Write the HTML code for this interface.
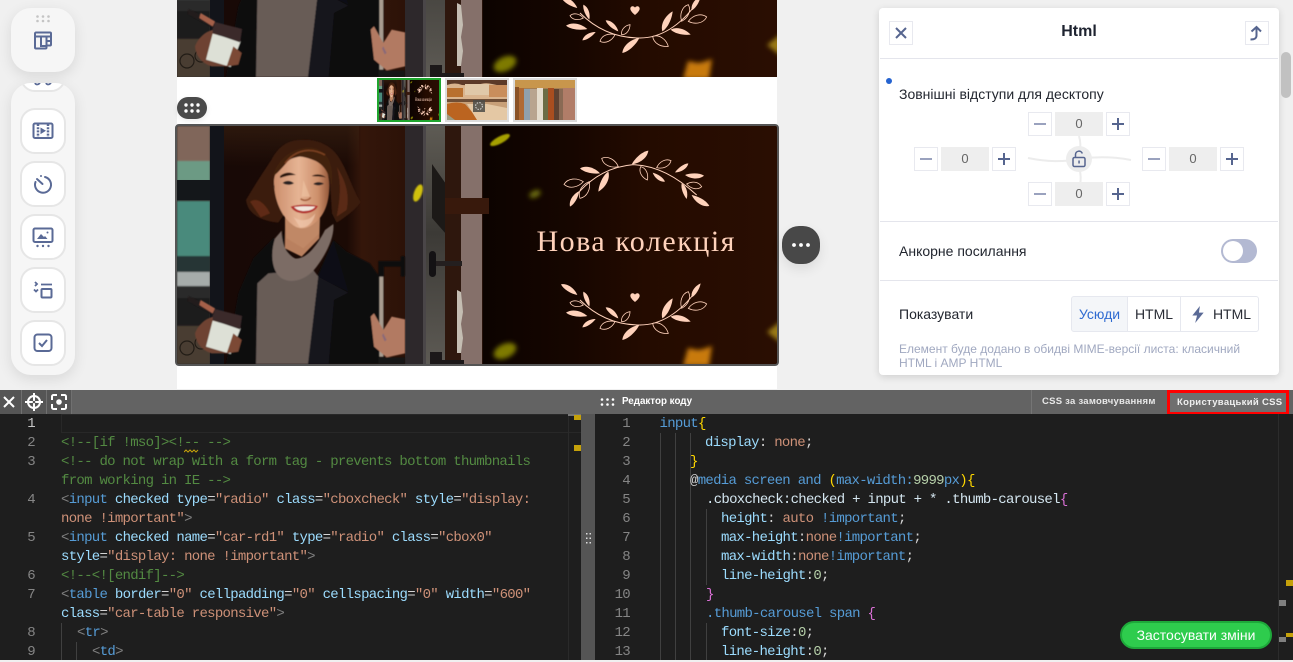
<!DOCTYPE html>
<html lang="uk"><head><meta charset="utf-8"><title>Html</title>
<style>
*{box-sizing:border-box}
html,body{margin:0;padding:0}
body{width:1293px;height:660px;overflow:hidden;background:#f0f0f0;position:relative;font-family:"Liberation Sans",sans-serif}
.a{position:absolute}
svg{display:block}
.tb{position:absolute;left:11px;width:64px;background:#f6f6f6;box-shadow:0 4px 14px rgba(0,0,0,.1)}
.bt{position:absolute;left:9px;width:46px;height:46px;background:#fff;border:2px solid #e6e6e6;border-radius:15px}
.bt svg{position:absolute;left:10px;top:10px}
.ic{fill:none;stroke:#5a6a96;stroke-width:1.8}
.thumb{position:absolute;top:78px;width:64px;height:44px;border:2px solid #dcdcdc;background:#fff;padding:1px}
.nb{position:absolute;width:24px;height:24px;background:#fff;border:1px solid #e8e9ef}
.nb:before{content:"";position:absolute;left:5px;top:10px;width:12px;height:2px;background:#9aa2be}
.nb.p:before{background:#56658f;left:5px;width:12px}
.nb.p:after{content:"";position:absolute;left:10px;top:5px;width:2px;height:12px;background:#56658f}
.nv{position:absolute;width:48px;height:24px;background:#eee;color:#666;font-size:13px;line-height:24px;text-align:center}
.tx{position:absolute;font-size:14px;color:#22262f;white-space:nowrap;line-height:18px}
.ln{position:absolute;height:1px;left:880px;width:398px;background:#e4e5ec}
.seg{position:absolute;top:296px;height:36px;line-height:34px;font-size:14px;color:#2a2d36;text-align:center;border:1px solid #e6e8ef}
.code{position:absolute;font-family:"Liberation Mono","DejaVu Sans Mono",monospace;font-size:14px;letter-spacing:-.71px;line-height:19px;height:19px;white-space:pre;color:#d4d4d4;transform:translateY(1px)}
.n{position:absolute;font-family:"Liberation Mono",monospace;font-size:14px;letter-spacing:-.71px;line-height:19px;color:#858585;text-align:right;width:24px;transform:translateY(1px)}
.g{position:absolute;width:1px;background:#404040}
.c{color:#538a42}.t{color:#569cd6}.b{color:#808080}.at{color:#9cdcfe}.s{color:#ce9178}
.y{color:#ffd700}.m{color:#da70d6}.w{color:#d4d4d4}.l{color:#d4e6f0}
</style></head><body>

<!-- hero artwork -->
<svg width="0" height="0" style="position:absolute">
<defs>
<filter id="bl" x="-60%" y="-60%" width="220%" height="220%"><feGaussianBlur stdDeviation="2.400"/></filter>
<filter id="bs" x="-20%" y="-20%" width="140%" height="140%"><feGaussianBlur stdDeviation=".7"/></filter>
<filter id="wf" x="-5%" y="-5%" width="110%" height="110%"><feGaussianBlur stdDeviation="1.500"/></filter>
<linearGradient id="rg" x1="0" x2="1" y1="0" y2="0"><stop offset="0" stop-color="#0c0300"/><stop offset=".3" stop-color="#160600"/><stop offset=".55" stop-color="#240b00"/><stop offset="1" stop-color="#2a0e02"/></linearGradient>
<linearGradient id="ig" x1="0" x2="1" y1="0" y2="0"><stop offset="0" stop-color="#180906"/><stop offset=".68" stop-color="#1b0a05"/><stop offset=".76" stop-color="#34160a"/><stop offset="1" stop-color="#2c1208"/></linearGradient>
<linearGradient id="it" x1="0" x2="0" y1="0" y2="1"><stop offset="0" stop-color="#3a2212" stop-opacity=".6"/><stop offset="1" stop-color="#3a2212" stop-opacity="0"/></linearGradient>
<linearGradient id="sk" x1="0" x2="1" y1="0" y2="0"><stop offset="0" stop-color="#cc8e6c"/><stop offset=".45" stop-color="#e6b494"/><stop offset=".8" stop-color="#cc8e6a"/><stop offset="1" stop-color="#94583a"/></linearGradient>
<linearGradient id="gl" x1="0" x2="0" y1="0" y2="1"><stop offset="0" stop-color="#5e5b54"/><stop offset=".45" stop-color="#3c3a36"/><stop offset="1" stop-color="#5d5a54"/></linearGradient>
<symbol id="hero" viewBox="0 0 600 238" preserveAspectRatio="none" overflow="hidden">
<rect x="306" width="294" height="238" fill="url(#rg)"/>
<!-- left window -->
<rect width="47" height="238" fill="#2c2a28"/>
<g filter="url(#bs)">
<rect width="33" height="40" fill="#80665a"/>
<rect y="35" width="33" height="20" fill="#6c9a84"/>
<rect y="75" width="33" height="60" fill="#4a8a7c"/>
<rect y="130" width="33" height="18" fill="#263436"/>
<rect y="146" width="33" height="14" fill="#a6acaa"/>
<rect y="160" width="33" height="12" fill="#2a2c2c"/>
<rect y="172" width="33" height="28" fill="#1e1c1a"/>
<rect y="200" width="33" height="38" fill="#4a3e30"/>
</g>
<circle cx="10" cy="222" r="7" fill="none" stroke="#221c16" stroke-width="1.200"/>
<circle cx="24" cy="217" r="6" fill="none" stroke="#221c16" stroke-width="1.200"/>
<rect y="54" width="47" height="20" fill="#14171a"/>
<rect x="33" width="14" height="238" fill="#12141a"/>
<!-- interior -->
<rect x="47" width="181" height="238" fill="url(#ig)"/>
<rect x="47" width="135" height="40" fill="url(#it)"/>
<!-- door -->
<rect x="248" width="58" height="238" fill="#26120a"/>
<rect x="249" width="19" height="238" fill="url(#gl)"/>
<path d="M255 38l14 20v50l-14-16z" fill="#1c1917"/>
<rect x="268" width="16" height="238" fill="#2e170d"/>
<rect x="284" width="21" height="73" fill="#85706a"/>
<rect x="284" y="88" width="21" height="150" fill="#85706a"/>
<rect x="268" y="72" width="44" height="16" fill="#38190c"/>
<path d="M280 164l4 2 2 20-2 12 2 14-2 15h-4z" fill="#c4bdb2"/>
<rect x="228" width="20" height="238" fill="#2d282b"/>
<rect x="246" width="3" height="238" fill="#4a4648"/>
<path d="M258 135h27v5h-27z" fill="#241f1f"/>
<rect x="252" y="125" width="7" height="26" rx="3.500" fill="#141214"/>
<path d="M253 226h12v8h22v4h-34z" fill="#1c1819"/>
<!-- woman: coordinates in 3x crop space -->
<g transform="translate(-7,-126) scale(.33333)" filter="url(#wf)">
<path d="M312 712L250 775 205 880 168 1092H628L625 825 600 790 530 755 490 720 440 830 345 850z" fill="#0c0b0f"/>
<path d="M295 820L262 850 258 1092H415L445 830 430 810z" fill="#675b56"/>
<path d="M445 830L535 878 492 900 476 1092H414z" fill="#15131a"/>
<path d="M490 720L535 875 445 830z" fill="#0f0e13"/>
<path d="M345 650L450 650 448 715 395 770 345 745z" fill="#b9805e"/>
<path d="M340 690L345 745 372 775 330 760z" fill="#100a08"/>
<path d="M490 672C494 710 470 760 440 800C415 835 370 855 335 835C305 815 300 760 315 715L335 692C336 730 345 760 375 775C410 780 445 730 465 690z" fill="#7b6c65"/>
<!-- hair -->
<path d="M305 478C280 515 248 565 228 600C232 635 262 662 325 668L345 640 310 560 330 490 420 470 478 520 486 640 500 668C530 650 560 625 572 606C548 570 532 510 505 470C480 430 430 415 390 420C350 420 322 445 305 478z" fill="#3a1b0d"/>
<path d="M240 605C262 590 285 610 300 640L272 652z" fill="#5e2c12"/>
<path d="M500 500C525 540 540 580 530 630L500 650C510 600 515 550 500 500z" fill="#5a2c15"/>
<path d="M348 660L448 660 448 700 400 745 350 715z" fill="#c08866"/>
<!-- face -->
<path d="M312 545C312 505 350 470 405 468C452 470 478 505 478 555C478 610 462 650 430 672C410 688 385 690 365 672C335 650 312 600 312 545z" fill="url(#sk)"/>
<path d="M308 530C320 480 365 440 425 442C470 448 495 490 485 560C478 520 462 490 425 478C395 468 372 462 348 490C335 505 322 520 308 530z" fill="#43200f"/>
<path d="M345 490C375 450 420 440 465 465" stroke="#7a4020" stroke-width="5" fill="none"/>
<path d="M330 528C345 515 362 515 378 525C362 524 345 528 330 534zM425 528C440 520 455 522 468 532C452 529 438 530 425 528z" fill="#2a140c"/>
<path d="M338 549C348 540 362 541 372 550C360 556 348 556 338 549zM430 552C438 544 452 545 462 551C452 557 440 558 430 552z" fill="#2c2422"/>
<path d="M392 596C400 604 416 602 422 592" stroke="#a5603e" stroke-width="5" fill="none"/>
<path d="M400 540L420 590 395 590z" fill="#f0c8a8" opacity=".55"/>
<path d="M362 620C385 612 420 612 444 618C438 632 420 640 402 640C385 640 370 634 362 620z" fill="#b3302f"/>
<path d="M372 621C392 618 415 618 436 620C428 630 415 633 402 633C390 633 380 630 372 621z" fill="#f2e6dc"/>
<path d="M370 650C390 668 420 662 436 640C430 670 410 684 390 682z" fill="#f0c8ac" opacity=".7"/>
<!-- cup & left hand -->
<path d="M75 1000C85 975 105 955 132 950L170 1000 170 1060 125 1060C95 1050 78 1030 75 1000z" fill="#6e4232"/>
<path d="M128 962L212 985 182 1062 108 1040z" fill="#dde0d6"/>
<path d="M128 925L216 948 210 988 128 960z" fill="#3b2a2c"/>
<path d="M190 1000L215 1020 205 1055 170 1060z" fill="#7c4a36"/>
<path d="M55 888L135 925 130 945 55 905z" fill="#201a1a"/>
<path d="M92 900L135 925 128 940 88 915z" fill="#a5604a"/>
<!-- door handle -->
<path d="M625 783H700V800H642V1092H625z" fill="#0e0c0d"/>
<rect x="628" y="830" width="12" height="240" fill="#a89c90"/>
<rect x="692" y="768" width="13" height="62" rx="5" fill="#0c0b0c"/>
<!-- right hand -->
<path d="M602 950L612 940 640 990 665 950 705 958V1060L650 1072 612 1040z" fill="#b27a62"/>
<path d="M640 1000l10 20-6 4-8-18z" fill="#8a6a78"/>
<path d="M625 1072H705V1092H625z" fill="#171314"/>
</g>
<!-- yellow blobs -->
<ellipse cx="241" cy="67" rx="4" ry="9" transform="rotate(20 241 67)" fill="#d0c010" filter="url(#bs)"/>
<ellipse cx="323" cy="14" rx="11" ry="3.500" transform="rotate(-28 323 14)" fill="#a5a000" filter="url(#bs)"/>
<ellipse cx="358" cy="68" rx="6" ry="3.500" transform="rotate(-25 358 68)" fill="#6a6a08" filter="url(#bl)"/>
<ellipse cx="328" cy="225" rx="12" ry="7" transform="rotate(-25 328 225)" fill="#7e7a05" filter="url(#bl)"/>
<!-- right side glow -->
<path d="M506 240l5-18 10 2 5-1 9-3-3 20z" fill="#c87a08" filter="url(#bl)"/>
<path d="M590 206l14-11v22z" fill="#9a7a18" filter="url(#bl)"/>
<!-- wreaths (coordinates in 3x space) -->
<g transform="translate(323,-126) scale(.33333)" fill="#ffd2bb">
<path d="M238 575C280 530 330 500 400 494C470 497 530 530 590 585" fill="none" stroke="#ffd2bb" stroke-width="3"/>
<path transform="matrix(60,15,-15,60,240,505)" d="M0 0C.25-.24.7-.2 1 0C.7.12.25.15 0 0Z"/>
<path transform="matrix(-30,60,-60,-30,325,515)" d="M0 0C.25-.24.7-.2 1 0C.7.12.25.15 0 0Z"/>
<path transform="matrix(-50,41,-41,-50,445,452)" d="M0 0C.25-.24.7-.2 1 0C.7.12.25.15 0 0Z"/>
<path transform="matrix(-40,27,-27,-40,565,490)" d="M0 0C.25-.24.7-.2 1 0C.7.12.25.15 0 0Z"/>
<path transform="matrix(-57,-2,2,-57,612,527)" d="M0 0C.25-.24.7-.2 1 0C.7.12.25.15 0 0Z"/>
<path transform="matrix(15,47,-47,15,545,550)" d="M0 0C.25-.24.7-.2 1 0C.7.12.25.15 0 0Z"/>
<path transform="matrix(-53,-33,33,-53,628,618)" d="M0 0C.25-.24.7-.2 1 0C.7.12.25.15 0 0Z"/>
<path transform="matrix(-37,-27,27,-37,495,545)" d="M0 0C.25-.24.7-.2 1 0C.7.12.25.15 0 0Z"/>
<path transform="matrix(28,-47,47,28,210,620)" d="M0 0C.25-.24.7-.2 1 0C.7.12.25.15 0 0Z"/>
<g fill="none" stroke="#ffd2bb" stroke-width=".8">
<path transform="matrix(50,25,-25,50,305,475)" d="M0 0C.25-.3.7-.25 1 0C.7.25.25.3 0 0Z" vector-effect="non-scaling-stroke"/>
<path transform="matrix(-43,21,-21,-43,513,482)" d="M0 0C.25-.3.7-.25 1 0C.7.25.25.3 0 0Z" vector-effect="non-scaling-stroke"/>
<path transform="matrix(20,40,-40,20,422,500)" d="M0 0C.25-.3.7-.25 1 0C.7.25.25.3 0 0Z" vector-effect="non-scaling-stroke"/>
<path transform="matrix(58,-8,8,58,192,553)" d="M0 0C.25-.3.7-.25 1 0C.7.25.25.3 0 0Z" vector-effect="non-scaling-stroke"/>
<path transform="matrix(28,-50,50,28,240,595)" d="M0 0C.25-.3.7-.25 1 0C.7.25.25.3 0 0Z" vector-effect="non-scaling-stroke"/>
<path transform="matrix(-45,-8,8,-45,605,560)" d="M0 0C.25-.3.7-.25 1 0C.7.25.25.3 0 0Z" vector-effect="non-scaling-stroke"/>
</g>
<path d="M240 900C290 950 350 975 420 975C480 975 540 940 590 870" fill="none" stroke="#ffd2bb" stroke-width="3"/>
<path transform="matrix(49,32,-32,49,183,853)" d="M0 0C.25-.24.7-.2 1 0C.7.12.25.15 0 0Z"/>
<path transform="matrix(18,45,-45,18,250,875)" d="M0 0C.25-.24.7-.2 1 0C.7.12.25.15 0 0Z"/>
<path transform="matrix(64,10,-10,64,198,938)" d="M0 0C.25-.24.7-.2 1 0C.7.12.25.15 0 0Z"/>
<path transform="matrix(40,-25,25,40,247,982)" d="M0 0C.25-.24.7-.2 1 0C.7.12.25.15 0 0Z"/>
<path transform="matrix(38,33,-33,38,317,922)" d="M0 0C.25-.24.7-.2 1 0C.7.12.25.15 0 0Z"/>
<path transform="matrix(51,-45,45,51,367,1020)" d="M0 0C.25-.24.7-.2 1 0C.7.12.25.15 0 0Z"/>
<path transform="matrix(31,-60,60,31,487,955)" d="M0 0C.25-.24.7-.2 1 0C.7.12.25.15 0 0Z"/>
<path transform="matrix(60,15,-15,60,512,950)" d="M0 0C.25-.24.7-.2 1 0C.7.12.25.15 0 0Z"/>
<path transform="matrix(27,-42,42,27,575,892)" d="M0 0C.25-.24.7-.2 1 0C.7.12.25.15 0 0Z"/>
<g fill="none" stroke="#ffd2bb" stroke-width=".8">
<path transform="matrix(40,7,-7,40,210,908)" d="M0 0C.25-.3.7-.25 1 0C.7.25.25.3 0 0Z" vector-effect="non-scaling-stroke"/>
<path transform="matrix(25,-30,30,25,365,965)" d="M0 0C.25-.3.7-.25 1 0C.7.25.25.3 0 0Z" vector-effect="non-scaling-stroke"/>
<path transform="matrix(45,-20,20,45,300,985)" d="M0 0C.25-.3.7-.25 1 0C.7.25.25.3 0 0Z" vector-effect="non-scaling-stroke"/>
<path transform="matrix(47,30,-30,47,458,970)" d="M0 0C.25-.3.7-.25 1 0C.7.25.25.3 0 0Z" vector-effect="non-scaling-stroke"/>
<path transform="matrix(-20,50,-50,-20,565,875)" d="M0 0C.25-.3.7-.25 1 0C.7.25.25.3 0 0Z" vector-effect="non-scaling-stroke"/>
<path transform="matrix(-55,13,-13,-55,620,912)" d="M0 0C.25-.3.7-.25 1 0C.7.25.25.3 0 0Z" vector-effect="non-scaling-stroke"/>
</g>
<path d="M405 906C395 898 391 892 391 887C391 879 401 877 405 884C409 877 419 879 419 887C419 892 415 898 405 906Z"/>
</g>
</symbol>
</defs>
</svg>

<!-- canvas -->
<div class="a" style="left:177px;top:0;width:600px;height:389px;background:#fff"></div>
<svg class="a" style="left:177px;top:0" width="600" height="77" viewBox="0 161 600 77"><use href="#hero" width="600" height="238"/></svg>

<div class="thumb" style="left:377px;border-color:#1fa52e;padding:0">
<svg width="60" height="40" viewBox="0 0 600 238" preserveAspectRatio="none"><use href="#hero" width="600" height="238"/><text x="360" y="125" font-family="Liberation Serif,serif" font-size="28" fill="#ffd2bb">Нова колекція</text></svg></div>
<div class="thumb" style="left:445px;padding:0">
<svg width="60" height="40" viewBox="0 0 60 40"><rect width="60" height="40" fill="#c8a078"/><rect width="60" height="5" fill="#5c3a28"/><path d="M0 5q8-3 15 0t15 0 15-1 15 1v14H0z" fill="#d9b48e"/><path d="M0 8h16v9H0z" fill="#b8702f"/><path d="M18 4h24v11H18z" fill="#e0c8a8"/><path d="M42 5h18v12H42z" fill="#c98e5c"/><rect y="19" width="60" height="3" fill="#6e4e36"/><path d="M0 24q10-3 18 0l14 16H0z" fill="#bb6420"/><path d="M20 24h20l20 4v12H30z" fill="#e4c8a4"/><path d="M0 34l8 6H0z" fill="#9d9c82"/></svg>
<div class="a" style="left:26px;top:20px;width:12px;height:12px;background:rgba(75,75,70,.85)"><svg width="12" height="12"><circle cx="6" cy="6" r="3.400" fill="none" stroke="#ddd" stroke-width="1" stroke-dasharray="1.500 1.200"/></svg></div></div>
<div class="thumb" style="left:513px;padding:0">
<svg width="60" height="40" viewBox="0 0 60 40"><rect width="60" height="40" fill="#a57e52"/><rect width="60" height="8" fill="#c8964c"/><rect y="7" width="4" height="33" fill="#8a5226"/><rect x="4" y="8" width="5" height="32" fill="#b06a34"/><rect x="9" y="9" width="6" height="31" fill="#90a0ac"/><rect x="15" y="9" width="7" height="31" fill="#b8a48e"/><rect x="22" y="8" width="6" height="32" fill="#e4dccc"/><rect x="28" y="9" width="5" height="31" fill="#6c6c44"/><rect x="33" y="8" width="6" height="32" fill="#a84e20"/><rect x="39" y="9" width="5" height="31" fill="#5e4232"/><rect x="44" y="9" width="4" height="31" fill="#8a6a54"/><rect x="48" y="8" width="12" height="32" fill="#b17d68"/></svg></div>

<div class="a" style="left:177px;top:97px;width:30px;height:22px;border-radius:11px;background:#4a4a4a;box-shadow:0 2px 6px rgba(0,0,0,.08)">
<svg width="30" height="22"><g fill="#fff"><circle cx="9" cy="8" r="1.700"/><circle cx="15" cy="8" r="1.700"/><circle cx="21" cy="8" r="1.700"/><circle cx="9" cy="14" r="1.700"/><circle cx="15" cy="14" r="1.700"/><circle cx="21" cy="14" r="1.700"/></g></svg></div>

<div class="a" style="left:175px;top:124px;width:604px;height:242px;border:2px solid #555;border-radius:4px;overflow:hidden;background:#222">
<svg width="600" height="238" viewBox="0 0 600 238"><use href="#hero" width="600" height="238"/><text x="359.500" y="125" font-family="Liberation Serif,serif" font-size="30" letter-spacing="1.500" fill="#ffd2bb">Нова колекція</text></svg></div>

<div class="a" style="left:782px;top:226px;width:38px;height:38px;border-radius:17px;background:#484848;box-shadow:0 5px 12px rgba(0,0,0,.09)">
<svg width="38" height="38"><g fill="#fff"><circle cx="12" cy="19" r="1.900"/><circle cx="19" cy="19" r="1.900"/><circle cx="26" cy="19" r="1.900"/></g></svg></div>

<!-- left toolbars -->
<div class="tb" style="top:8px;height:64px;border-radius:20px">
<svg class="a" style="left:25px;top:7px" width="14" height="8"><g fill="#c4c4c4"><circle cx="1.500" cy="1.500" r="1.300"/><circle cx="7" cy="1.500" r="1.300"/><circle cx="12.500" cy="1.500" r="1.300"/><circle cx="1.500" cy="6" r="1.300"/><circle cx="7" cy="6" r="1.300"/><circle cx="12.500" cy="6" r="1.300"/></g></svg>
<svg class="a" style="left:22px;top:22px" width="20" height="20" viewBox="0 0 20 20"><g class="ic" style="stroke-width:2"><path d="M3 2.500h14a1 1 0 0 1 1 1v11a1 1 0 0 1-1 1h-3.500v2a1 1 0 0 1-1 1H3a1 1 0 0 1-1-1v-14a1 1 0 0 1 1-1z"/><path d="M2 6.500h16M8 6.500v9.500h5.500M13.500 6.500v9M13.500 11h4.500"/></g></svg>
</div>
<div class="tb" style="top:83px;height:292px;border-radius:20px;overflow:hidden">
<div class="bt" style="top:-37px"><svg width="22" height="22" viewBox="0 0 22 22" style="top:26px;left:10px"><path d="M3 9c1 2 3 2 5 0M14 9c1 2 3 2 5 0" class="ic"/></svg></div>
<div class="bt" style="top:25px"><svg width="22" height="22" viewBox="0 0 22 22"><rect x="1.500" y="3.500" width="19" height="14.500" rx="1.500" class="ic" style="stroke-width:2"/><path d="M6 4v14M16 4v14" class="ic" stroke-dasharray="2 1.200" style="stroke-width:2.500"/><path d="M8.500 7.500l5.500 3.300-5.500 3.300z" fill="#5a6a96"/></svg></div>
<div class="bt" style="top:78px"><svg width="22" height="22" viewBox="0 0 22 22"><path d="M13 4a8 8 0 1 1-9.500 5" class="ic" stroke-linecap="round" style="stroke-width:2"/><path d="M5 6l5.500 5" class="ic" stroke-linecap="round" style="stroke-width:2"/><circle cx="9" cy="3" r="1" fill="#5a6a96"/></svg></div>
<div class="bt" style="top:131px"><svg width="22" height="22" viewBox="0 0 22 22"><rect x="1.500" y="2.500" width="19" height="13.500" rx="1.500" class="ic" style="stroke-width:2"/><path d="M5 13l4-5 3 3 1-1 2.500 3z" fill="#5a6a96"/><circle cx="15.500" cy="6.500" r="1" fill="#5a6a96"/><circle cx="5.500" cy="20" r="1.200" fill="#5a6a96"/><circle cx="11" cy="20" r="1.200" fill="#5a6a96"/><circle cx="16.500" cy="20" r="1.200" fill="#5a6a96"/></svg></div>
<div class="bt" style="top:184px"><svg width="22" height="22" viewBox="0 0 22 22"><path d="M3 3l2 2-2 2M2 10.500l2 2 2-2M9 5.500h11" class="ic"/><rect x="9.500" y="10" width="10" height="8.500" rx="1" class="ic" style="stroke-width:2"/></svg></div>
<div class="bt" style="top:237px"><svg width="22" height="22" viewBox="0 0 22 22"><rect x="2.500" y="2.500" width="17" height="16.500" rx="3" class="ic" style="stroke-width:2"/><path d="M7 11l3 3 5-6" class="ic" style="stroke-width:2"/></svg></div>
</div>

<!-- right panel -->
<div class="a" style="left:879px;top:8px;width:400px;height:367px;background:#fff;border-radius:4px;box-shadow:0 2px 8px rgba(0,0,0,.14)"></div>
<div class="ln" style="top:58px"></div>
<div class="a" style="left:889px;top:21px;width:24px;height:24px;border:1px solid #e8e9ef"><svg width="22" height="22"><path d="M6 6l10 10M16 6L6 16" stroke="#56658f" stroke-width="2" fill="none"/></svg></div>
<div class="a" style="left:1245px;top:21px;width:24px;height:24px;border:1px solid #e8e9ef"><svg width="22" height="22"><path d="M4.500 17.500c4 0 6-1 6-4V5.500M5.500 9.500L10.500 5l4.500 4.500" stroke="#56658f" stroke-width="2" fill="none"/></svg></div>
<div class="a" style="left:879px;top:23px;width:400px;text-align:center;font-weight:bold;font-size:16px;line-height:18px;color:#1e2330">Html</div>
<div class="a" style="left:886px;top:78px;width:6px;height:6px;border-radius:50%;background:#2563d0"></div>
<div class="tx" style="left:899px;top:85px">Зовнішні відступи для десктопу</div>

<svg class="a" style="left:1010px;top:110px" width="140" height="100"><path d="M18 48c20 4 35 4 51 1 20-3 36-2 52 1M69 26c3 10 0 14 0 23 0 12 3 16 1 26" fill="none" stroke="#ececec" stroke-width="2"/></svg>
<div class="a" style="left:1066px;top:146px;width:26px;height:26px;border-radius:50%;background:#ededed"></div>
<svg class="a" style="left:1071px;top:150px" width="16" height="18" viewBox="0 0 16 18"><rect x="2" y="7.500" width="12" height="9" rx="1.500" fill="none" stroke="#56658f" stroke-width="1.500"/><path d="M4.500 7.500V4.500a3.500 3.500 0 0 1 6.800-1" fill="none" stroke="#56658f" stroke-width="1.500"/><rect x="7.300" y="10.500" width="1.500" height="3" fill="#56658f"/></svg>

<div class="nb" style="left:1028px;top:112px"></div><div class="nv" style="left:1055px;top:112px">0</div><div class="nb p" style="left:1106px;top:112px"></div>
<div class="nb" style="left:914px;top:147px"></div><div class="nv" style="left:941px;top:147px">0</div><div class="nb p" style="left:992px;top:147px"></div>
<div class="nb" style="left:1142px;top:147px"></div><div class="nv" style="left:1169px;top:147px">0</div><div class="nb p" style="left:1220px;top:147px"></div>
<div class="nb" style="left:1028px;top:182px"></div><div class="nv" style="left:1055px;top:182px">0</div><div class="nb p" style="left:1106px;top:182px"></div>

<div class="ln" style="top:221px"></div>
<div class="tx" style="left:899px;top:242px">Анкорне посилання</div>
<div class="a" style="left:1221px;top:239px;width:36px;height:24px;border-radius:12px;background:#b3b9d2"></div>
<div class="a" style="left:1223px;top:241px;width:20px;height:20px;border-radius:50%;background:#fff"></div>
<div class="ln" style="top:280px"></div>
<div class="tx" style="left:899px;top:305px">Показувати</div>
<div class="seg" style="left:1071px;width:57px;background:#f4f6f9;color:#2f6bd1;border-radius:3px 0 0 3px">Усюди</div>
<div class="seg" style="left:1127px;width:54px">HTML</div>
<div class="seg" style="left:1180px;width:79px;padding-left:25px;border-radius:0 3px 3px 0">HTML
<svg class="a" style="left:10px;top:9px" width="14" height="17" viewBox="0 0 14 18"><path d="M9 0L1 10h5l-2 8 9-11H8z" fill="#5a6a96"/></svg></div>
<div class="a" style="left:899px;top:342px;width:370px;font-size:12px;line-height:14px;color:#a0a8c0">Елемент буде додано в обидві MIME-версії листа: класичний<br>HTML і AMP HTML</div>

<div class="a" style="left:1281px;top:52px;width:10px;height:46px;border-radius:5px;background:#c1c1c1"></div>

<!-- editor -->
<div class="a" style="left:0;top:390px;width:1293px;height:24px;background:#636363"></div>
<div class="a" style="left:0;top:390px;width:72px;height:24px;background:#555"></div>
<div class="a" style="left:21px;top:390px;width:1px;height:24px;background:#707070"></div>
<div class="a" style="left:46px;top:390px;width:1px;height:24px;background:#707070"></div>
<div class="a" style="left:71px;top:390px;width:1px;height:24px;background:#707070"></div>
<svg class="a" style="left:0;top:390px" width="72" height="24"><path d="M4 7l10 10M14 7L4 17" stroke="#fff" stroke-width="2" fill="none"/><circle cx="34" cy="12" r="6" fill="none" stroke="#fff" stroke-width="2"/><path d="M34 3v18M25 12h18" stroke="#fff" stroke-width="2"/><circle cx="34" cy="12" r="1.300" fill="#555"/><circle cx="59" cy="12" r="2.800" fill="#fff"/><path d="M52 10V6.500A1.500 1.500 0 0 1 53.500 5H57M61 5h3.500A1.500 1.500 0 0 1 66 6.500V10M66 14v3.500a1.500 1.500 0 0 1-1.500 1.500H61M57 19h-3.500a1.500 1.500 0 0 1-1.500-1.500V14" fill="none" stroke="#fff" stroke-width="2"/></svg>

<svg class="a" style="left:600px;top:398px" width="16" height="8"><g fill="#fff"><circle cx="2" cy="1.500" r="1.300"/><circle cx="7.500" cy="1.500" r="1.300"/><circle cx="13" cy="1.500" r="1.300"/><circle cx="2" cy="6.500" r="1.300"/><circle cx="7.500" cy="6.500" r="1.300"/><circle cx="13" cy="6.500" r="1.300"/></g></svg>
<div class="a" style="left:622px;top:390px;line-height:24px;font-size:9.800px;font-weight:bold;color:#fff;white-space:nowrap">Редактор коду</div>
<div class="a" style="left:1031px;top:390px;width:1px;height:24px;background:#757575"></div>
<div class="a" style="left:1042px;top:390px;line-height:24px;font-size:9.500px;font-weight:bold;color:#e8e8e8;white-space:nowrap;letter-spacing:.25px">CSS за замовчуванням</div>
<div class="a" style="left:1167px;top:390px;width:122px;height:25px;border:3px solid #f00;background:#6f6f6f;color:#f0f0f0;font-size:9.500px;font-weight:bold;line-height:19px;padding-left:7px;white-space:nowrap;letter-spacing:.3px">Користувацький CSS</div>

<div class="a" style="left:0;top:414px;width:581px;height:246px;background:#1e1e1e"></div>
<div class="a" style="left:581px;top:414px;width:14px;height:246px;background:#555"></div>
<div class="a" style="left:595px;top:414px;width:698px;height:246px;background:#1e1e1e"></div>
<div class="a" style="left:61px;top:414px;width:520px;height:19px;border:1.500px solid #282828;border-right:0"></div>
<div class="a" style="left:568px;top:414px;width:1px;height:246px;background:#2a2a2a"></div>
<div class="a" style="left:568px;top:414px;width:13px;height:2px;background:#777"></div>
<div class="a" style="left:574px;top:415px;width:7px;height:5px;background:#c5a10a"></div>
<div class="a" style="left:574px;top:445px;width:7px;height:6px;background:#c5a10a"></div>
<svg class="a" style="left:586px;top:533px" width="5" height="13"><g fill="#ddd"><rect width="1.500" height="1.500"/><rect x="3.500" width="1.500" height="1.500"/><rect y="4.500" width="1.500" height="1.500"/><rect x="3.500" y="4.500" width="1.500" height="1.500"/><rect y="9" width="1.500" height="1.500"/><rect x="3.500" y="9" width="1.500" height="1.500"/></g></svg>

<div class="g" style="left:61px;top:623px;height:37px"></div>
<div class="g" style="left:76px;top:642px;height:18px"></div>
<div class="n" style="left:11px;top:414px;color:#c6c6c6">1</div>
<div class="n" style="left:11px;top:433px">2</div>
<div class="n" style="left:11px;top:452px">3</div>
<div class="n" style="left:11px;top:490px">4</div>
<div class="n" style="left:11px;top:528px">5</div>
<div class="n" style="left:11px;top:566px">6</div>
<div class="n" style="left:11px;top:585px">7</div>
<div class="n" style="left:11px;top:623px">8</div>
<div class="n" style="left:11px;top:642px">9</div>

<div class="code c" style="left:61px;top:433px">&lt;!--[if !mso]&gt;&lt;!-- --&gt;</div>
<svg class="a" style="left:184px;top:449px" width="15" height="4"><path d="M0 3l2-2 2 2 2-2 2 2 2-2 2 2 2-2" fill="none" stroke="#c5a10a" stroke-width="1"/></svg>
<div class="code c" style="left:61px;top:452px">&lt;!-- do not wrap with a form tag - prevents bottom thumbnails</div>
<div class="code c" style="left:61px;top:471px">from working in IE --&gt;</div>
<div class="code" style="left:61px;top:490px"><span class="b">&lt;</span><span class="t">input</span> <span class="at">checked</span> <span class="at">type</span><span class="w">=</span><span class="s">"radio"</span> <span class="at">class</span><span class="w">=</span><span class="s">"cboxcheck"</span> <span class="at">style</span><span class="w">=</span><span class="s">"display:</span></div>
<div class="code s" style="left:61px;top:509px">none !important"<span class="b">&gt;</span></div>
<div class="code" style="left:61px;top:528px"><span class="b">&lt;</span><span class="t">input</span> <span class="at">checked</span> <span class="at">name</span><span class="w">=</span><span class="s">"car-rd1"</span> <span class="at">type</span><span class="w">=</span><span class="s">"radio"</span> <span class="at">class</span><span class="w">=</span><span class="s">"cbox0"</span></div>
<div class="code" style="left:61px;top:547px"><span class="at">style</span><span class="w">=</span><span class="s">"display: none !important"</span><span class="b">&gt;</span></div>
<div class="code c" style="left:61px;top:566px">&lt;!--&lt;![endif]--&gt;</div>
<div class="code" style="left:61px;top:585px"><span class="b">&lt;</span><span class="t">table</span> <span class="at">border</span><span class="w">=</span><span class="s">"0"</span> <span class="at">cellpadding</span><span class="w">=</span><span class="s">"0"</span> <span class="at">cellspacing</span><span class="w">=</span><span class="s">"0"</span> <span class="at">width</span><span class="w">=</span><span class="s">"600"</span></div>
<div class="code" style="left:61px;top:604px"><span class="at">class</span><span class="w">=</span><span class="s">"car-table responsive"</span><span class="b">&gt;</span></div>
<div class="code" style="left:77px;top:623px"><span class="b">&lt;</span><span class="t">tr</span><span class="b">&gt;</span></div>
<div class="code" style="left:92px;top:642px"><span class="b">&lt;</span><span class="t">td</span><span class="b">&gt;</span></div>

<!-- right code -->
<div class="g" style="left:660px;top:433px;height:227px"></div>
<div class="g" style="left:675px;top:433px;height:227px"></div>
<div class="g" style="left:690px;top:433px;height:227px"></div>
<div class="g" style="left:706px;top:509px;height:76px"></div>
<div class="g" style="left:706px;top:623px;height:37px"></div>
<div class="n" style="left:606px;top:414px">1</div>
<div class="n" style="left:606px;top:433px">2</div>
<div class="n" style="left:606px;top:452px">3</div>
<div class="n" style="left:606px;top:471px">4</div>
<div class="n" style="left:606px;top:490px">5</div>
<div class="n" style="left:606px;top:509px">6</div>
<div class="n" style="left:606px;top:528px">7</div>
<div class="n" style="left:606px;top:547px">8</div>
<div class="n" style="left:606px;top:566px">9</div>
<div class="n" style="left:606px;top:585px">10</div>
<div class="n" style="left:606px;top:604px">11</div>
<div class="n" style="left:606px;top:623px">12</div>
<div class="n" style="left:606px;top:642px">13</div>

<div class="code" style="left:659.500px;top:414px"><span class="t">input</span><span class="y">{</span></div>
<div class="code" style="left:705px;top:433px"><span class="at">display</span><span class="w">: </span><span class="s">none</span><span class="w">;</span></div>
<div class="code y" style="left:690px;top:452px">}</div>
<div class="code" style="left:690px;top:471px"><span class="w">@</span><span class="t">media screen and </span><span class="y">(</span><span class="t">max-width:</span><span style="color:#b5cea8">9999</span><span class="t">px</span><span class="y">)</span><span class="y">{</span></div>
<div class="code l" style="left:706px;top:490px">.cboxcheck:checked + input + * .thumb-carousel<span class="m">{</span></div>
<div class="code" style="left:721px;top:509px"><span class="at">height</span><span class="w">: </span><span class="s">auto</span> <span class="t">!important</span><span class="w">;</span></div>
<div class="code" style="left:721px;top:528px"><span class="at">max-height</span><span class="w">:</span><span class="s">none</span><span class="t">!important</span><span class="w">;</span></div>
<div class="code" style="left:721px;top:547px"><span class="at">max-width</span><span class="w">:</span><span class="s">none</span><span class="t">!important</span><span class="w">;</span></div>
<div class="code" style="left:721px;top:566px"><span class="at">line-height</span><span class="w">:</span><span style="color:#b5cea8">0</span><span class="w">;</span></div>
<div class="code m" style="left:706px;top:585px">}</div>
<div class="code" style="left:706px;top:604px"><span class="t">.thumb-carousel span </span><span class="m">{</span></div>
<div class="code" style="left:721px;top:623px"><span class="at">font-size</span><span class="w">:</span><span style="color:#b5cea8">0</span><span class="w">;</span></div>
<div class="code" style="left:721px;top:642px"><span class="at">line-height</span><span class="w">:</span><span style="color:#b5cea8">0</span><span class="w">;</span></div>

<div class="a" style="left:1278px;top:414px;width:1px;height:246px;background:#2c2c2c"></div>
<div class="a" style="left:1286px;top:580px;width:7px;height:6px;background:#c5a10a"></div>
<div class="a" style="left:1279px;top:600px;width:7px;height:6px;background:#808080"></div>
<div class="a" style="left:1286px;top:633px;width:7px;height:4px;background:#c5a10a"></div>
<div class="a" style="left:1279px;top:637px;width:7px;height:5px;background:#808080"></div>

<div class="a" style="left:1120px;top:621px;width:152px;height:28px;border-radius:14px;background:#2ecc4d;border:2px solid #1ea83a;color:#fff;font-size:14px;line-height:24px;text-align:center;white-space:nowrap">Застосувати зміни</div>
</body></html>
